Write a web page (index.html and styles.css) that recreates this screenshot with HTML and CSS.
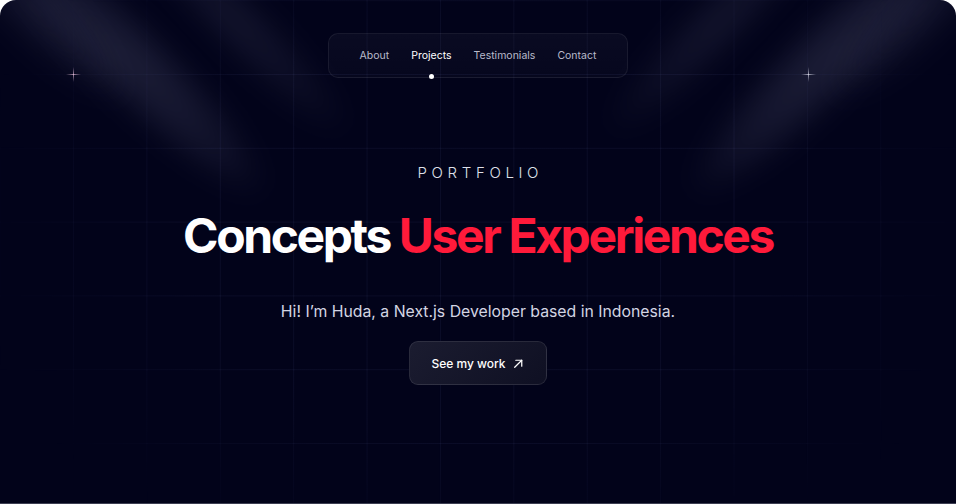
FILE: index.html
```html
<!DOCTYPE html>
<html lang="en">
<head>
<meta charset="utf-8">
<title>Huda — Portfolio</title>
<link rel="stylesheet" href="styles.css">
</head>
<body>
<main class="page">
  <div class="grid"></div>
  <div class="beam beam-left-a"></div>
  <div class="beam beam-left-b"></div>
  <div class="beam beam-left-c"></div>
  <div class="beam beam-right-a"></div>
  <div class="beam beam-right-b"></div>
  <div class="beam beam-right-c"></div>
  <span class="sparkle sparkle-left"></span>
  <span class="sparkle sparkle-right"></span>

  <nav class="nav">
    <a class="nav-link" href="#about">About</a>
    <a class="nav-link active" href="#projects">Projects</a>
    <a class="nav-link" href="#testimonials">Testimonials</a>
    <a class="nav-link" href="#contact">Contact</a>
  </nav>

  <section class="hero">
    <p class="eyebrow">PORTFOLIO</p>
    <h1 class="title">Concepts <span class="accent">User Experiences</span></h1>
    <p class="intro">Hi! I’m Huda, a Next.js Developer based in Indonesia.</p>
    <a class="cta" href="#projects">See my work
      <svg class="cta-icon" viewBox="0 0 24 24" width="13" height="13" fill="none" stroke="currentColor" stroke-width="2.3" stroke-linecap="round" stroke-linejoin="round"><path d="M5 19L18 6"/><path d="M7 6h11v11"/></svg>
    </a>
  </section>
</main>
</body>
</html>
```

FILE: styles.css
```css
* { box-sizing: border-box; }

html, body {
  margin: 0;
  padding: 0;
  background: #ffffff;
}

body {
  font-family: Inter, "Noto Sans", "Liberation Sans", sans-serif;
  color: #ffffff;
}

.page {
  position: relative;
  width: 956px;
  height: 504px;
  background: #02031a;
  border-radius: 16px 16px 0 0;
  border-bottom: 1px solid #3c3e52;
  overflow: hidden;
  display: flex;
  flex-direction: column;
  align-items: center;
}

.grid {
  position: absolute;
  inset: 0;
  background-image:
    linear-gradient(to right, rgba(140, 150, 220, 0.07) 1px, transparent 1px),
    linear-gradient(to bottom, rgba(140, 150, 220, 0.07) 1px, transparent 1px);
  background-size: 73.4px 73.8px;
  background-position: 73px 74px;
  -webkit-mask-image: radial-gradient(ellipse 55% 75% at 50% 45%, #000 55%, transparent 100%);
  mask-image: radial-gradient(ellipse 55% 75% at 50% 45%, #000 55%, transparent 100%);
  pointer-events: none;
}

.beam {
  position: absolute;
  pointer-events: none;
  border-radius: 50%;
  filter: blur(12px);
}

.beam-left-a {
  width: 80px;
  height: 380px;
  left: 90px;
  top: -130px;
  transform: rotate(-45deg);
  background: radial-gradient(ellipse at center, rgba(200, 202, 245, 0.14) 0%, rgba(200, 202, 245, 0.065) 50%, transparent 72%);
}

.beam-left-b {
  width: 60px;
  height: 320px;
  left: 205px;
  top: -140px;
  transform: rotate(-45deg);
  background: radial-gradient(ellipse at center, rgba(200, 202, 245, 0.09) 0%, rgba(200, 202, 245, 0.04) 50%, transparent 72%);
}

.beam-left-c {
  width: 70px;
  height: 260px;
  left: 0px;
  top: -120px;
  transform: rotate(-45deg);
  background: radial-gradient(ellipse at center, rgba(200, 202, 245, 0.09) 0%, rgba(200, 202, 245, 0.035) 50%, transparent 72%);
}

.beam-right-a {
  width: 80px;
  height: 380px;
  right: 90px;
  top: -130px;
  transform: rotate(45deg);
  background: radial-gradient(ellipse at center, rgba(200, 202, 245, 0.14) 0%, rgba(200, 202, 245, 0.065) 50%, transparent 72%);
}

.beam-right-b {
  width: 60px;
  height: 320px;
  right: 205px;
  top: -140px;
  transform: rotate(45deg);
  background: radial-gradient(ellipse at center, rgba(200, 202, 245, 0.09) 0%, rgba(200, 202, 245, 0.04) 50%, transparent 72%);
}

.beam-right-c {
  width: 70px;
  height: 260px;
  right: 0px;
  top: -120px;
  transform: rotate(45deg);
  background: radial-gradient(ellipse at center, rgba(200, 202, 245, 0.09) 0%, rgba(200, 202, 245, 0.035) 50%, transparent 72%);
}

.sparkle {
  position: absolute;
  width: 15px;
  height: 15px;
  background:
    linear-gradient(to right, transparent, rgba(230, 190, 220, 0.7) 50%, transparent) center / 15px 1px no-repeat,
    linear-gradient(to bottom, transparent, rgba(230, 190, 220, 0.7) 50%, transparent) center / 1px 15px no-repeat;
  pointer-events: none;
}

.sparkle-left { left: 66px; top: 67px; }
.sparkle-right {
  left: 801px;
  top: 67px;
  background:
    linear-gradient(to right, transparent, rgba(225, 225, 240, 0.7) 50%, transparent) center / 15px 1px no-repeat,
    linear-gradient(to bottom, transparent, rgba(225, 225, 240, 0.7) 50%, transparent) center / 1px 15px no-repeat;
}

.nav {
  position: relative;
  margin-top: 33px;
  height: 45px;
  padding: 0 31px;
  display: flex;
  align-items: center;
  gap: 22px;
  border: 1px solid rgba(255, 255, 255, 0.07);
  border-radius: 10px;
  background: linear-gradient(180deg, rgba(255, 255, 255, 0.035), rgba(255, 255, 255, 0.02));
}

.nav-link {
  position: relative;
  font-size: 10.5px;
  color: #b9bbcc;
  text-decoration: none;
  line-height: 14px;
}

.nav-link.active {
  color: #ffffff;
}

.nav-link.active::after {
  content: "";
  position: absolute;
  left: 50%;
  top: 25px;
  width: 5px;
  height: 5px;
  margin-left: -2.5px;
  border-radius: 50%;
  background: #ffffff;
}

.hero {
  position: relative;
  display: flex;
  flex-direction: column;
  align-items: center;
}

.eyebrow {
  margin: 86px 0 0;
  font-size: 15px;
  font-weight: 300;
  letter-spacing: 0.31em;
  margin-right: -0.31em;
  color: #dfe0ea;
  line-height: 18px;
}

.title {
  margin: 25px 0 0;
  font-size: 48px;
  font-weight: 700;
  letter-spacing: -0.05em;
  line-height: 58px;
  color: #ffffff;
}

.accent {
  color: #ff1a3a;
}

.intro {
  margin: 36px 0 0;
  font-size: 15.8px;
  font-weight: 400;
  color: #d3d5e3;
  line-height: 22px;
}

.cta {
  margin-top: 18px;
  width: 138px;
  height: 44px;
  display: flex;
  align-items: center;
  justify-content: center;
  gap: 6px;
  border: 1px solid rgba(255, 255, 255, 0.1);
  border-radius: 9px;
  background: linear-gradient(135deg, #1b1c30, #0f1023);
  color: #ffffff;
  font-size: 12px;
  font-weight: 500;
  text-decoration: none;
}

.cta-icon {
  display: block;
}
```
